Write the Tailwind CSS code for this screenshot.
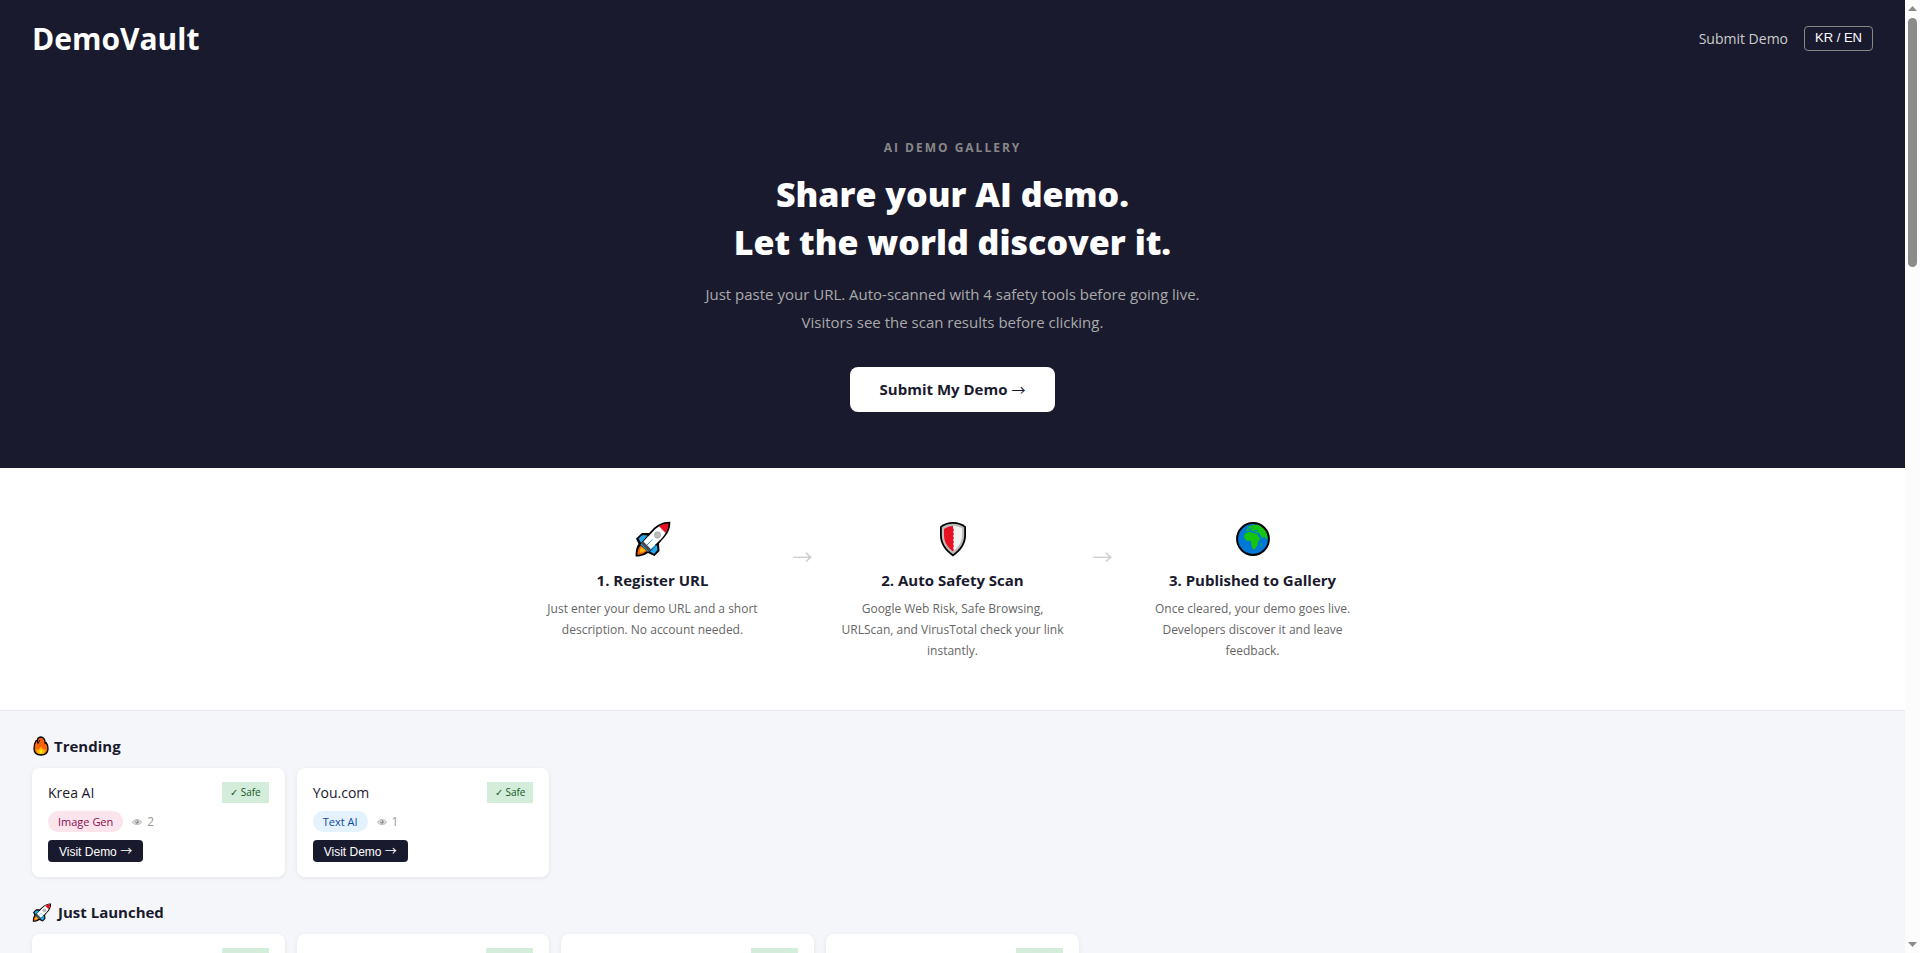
<!DOCTYPE html>
<html lang="en">
<head>
    <meta charset="UTF-8">
    <meta name="viewport" content="width=device-width, initial-scale=1.0">
    <title>DemoVault</title>
    <!-- Tailwind CSS CDN -->
    <script src="https://cdn.jsdelivr.net/npm/@tailwindcss/browser@4"></script>
</head>
<body class="flex h-screen overflow-hidden bg-[#f5f6fa] font-['Open_Sans','Noto_Sans',sans-serif] text-[#1a1a2e]">

    <!-- Shared icons -->
    <svg class="hidden" aria-hidden="true">
        <symbol id="icon-rocket" viewBox="0 0 36 36">
            <path d="M35.3 .8C28 .6 22 3.600 17 9L14 12 7 12 1 17.500 3.500 23C1 26 .5 31 .6 35.600 5 35.600 9 34.800 13 32L19.500 35 24.500 30 24 22.500 27 19C32.500 13.500 35.600 8 35.300 .8Z" fill="#000"/>
            <path d="M7.500 14 3.500 17.500 6 22 12.500 14.500Z M22 24 15 30.500 19 33 22.500 29Z" fill="#26a7ea"/>
            <path d="M12 17 5.500 23.500 13 31 21 25 13 15Z" fill="#26a7ea"/>
            <path d="M5.500 24.500C3.200 27 2.500 30 2.400 33.700 6.500 33.500 9 32.500 12 30Z" fill="#f7630c"/>
            <path d="M6.500 26C5 28 4.500 30 5 31.500 7 31.500 8.500 31 10.500 29.500Z" fill="#ffb900"/>
            <path d="M6 22.500 8.500 20 16 28 13.500 30.500Z" fill="#454b4f"/>
            <path d="M33 3C27 3.200 22.500 5.800 18 10.500L8.500 20.500 15.800 28 26 18C30 14 32.800 9 33 3Z" fill="#fff"/>
            <path d="M33.500 2.500C30 2.600 27 3.500 24 5.200L30.500 12C32.500 9 33.400 6 33.500 2.500Z" fill="#e81123"/>
            <circle cx="22.5" cy="14" r="3.200" fill="#bdbdbd" stroke="#999" stroke-width=".6"/>
            <path d="M12 24 17.500 18.500" stroke="#26a7ea" stroke-width="1"/>
        </symbol>
        <symbol id="icon-shield" viewBox="0 0 28 36">
            <path d="M14 1C9 1 4.500 2.500 1 5.500V14C1 23 6 30 14 35.500 22 30 27 23 27 14V5.500C23.500 2.500 19 1 14 1Z" fill="#000"/>
            <path d="M14 2.700C10 2.700 6 3.800 2.800 6.300V14C2.800 22 7 28.200 14 33.200 21 28.200 25.200 22 25.200 14V6.300C22 3.800 18 2.700 14 2.700Z" fill="#bdbdbd"/>
            <path d="M14 5C18 5 21 6 23 7.500V14C23 20.500 20 26 14 30.500Z" fill="#f2f2f2"/>
            <path d="M14 5C10 5 7 6.500 5 8V14C5 20.500 8 26 14 30.500L15 29 14 27 15 25 14 23 15 21 14 19 15 17 14 15 15 13 14 11 15 9 14 7Z" fill="#e81123"/>
        </symbol>
        <symbol id="icon-globe" viewBox="0 0 34 34">
            <circle cx="17" cy="17" r="16" fill="#0078d7"/>
            <path d="M9 11.500 13 9.800 16 10.500 18.500 11.500 21 11.500 22.500 15 24.500 16 22 20 21.500 23 19 27 17 27.500 15.500 23.500 15 19 10 18.500 7.800 15Z M10.500 8.500 12 5 17 3 22 2.500 29 7 32 15 31 18 28.500 14.500 26.500 16.500 23 11 17.500 9.500 14.500 8 11.500 9.500Z M24.500 22 26 21 25 25Z" fill="#16c60c"/>
            <path d="M12 6.500 15 7.500 17 5.500 M18 8.500 22 9" stroke="#0078d7" stroke-width="1" fill="none"/>
            <circle cx="17" cy="17" r="15.900" fill="none" stroke="#000" stroke-width="2"/>
        </symbol>
        <symbol id="icon-fire" viewBox="0 0 16 20">
            <path d="M7.500 1C5 1.300 4.500 3 4.300 4.500L3 4.800C1.500 7 .8 10 1 13 1.200 17 4 19 8 19S14.800 17 15 13C15.200 10.500 14.300 8 13 6.500L12.200 7C12 4 10.500 1 7.500 1Z" fill="#f7630c" stroke="#000" stroke-width="1.300"/>
            <path d="M4.300 4.500 5 7.500 7 4" fill="none" stroke="#000" stroke-width="1"/>
            <path d="M3.500 13 5.500 14 8 10.500 10.500 14 12.500 13C13 16 11 18 8 18S3 16 3.500 13Z" fill="#ffb900"/>
            <path d="M8 13.500C9.500 15 10 17.500 8 17.500S6.500 15 8 13.500Z" fill="#fff100"/>
        </symbol>
        <symbol id="icon-eye" viewBox="0 0 10 8">
            <path d="M.3 4.200C2.500 .6 7.500 .6 9.700 4.200 7.500 7.500 2.500 7.500 .3 4.200Z" fill="#ddd" stroke="#aaa" stroke-width=".7"/>
            <circle cx="5" cy="4" r="1.800" fill="#8c8c8c"/>
            <circle cx="4.300" cy="3.400" r=".7" fill="#eee"/>
        </symbol>
    </svg>

    <div class="min-w-0 flex-1 overflow-hidden">
        <div class="min-h-[468px] bg-[#1a1a2e] text-white">
            <header class="flex items-center justify-between px-8 pt-4">
                <a href="#" class="text-[30px] leading-[46px] font-bold">DemoVault</a>
                <nav class="flex items-center gap-4">
                    <a href="#submit" class="text-[14px] leading-5 text-[#ccc]">Submit Demo</a>
                    <button type="button" class="mb-[2px] h-[25px] rounded border border-[#888] px-[10px] font-['Liberation_Sans',Arial,sans-serif] text-[13px] leading-4">KR / EN</button>
                </nav>
            </header>

            <section class="flex flex-col items-center pt-[77px] text-center">
                <p class="text-[12px] leading-[18px] font-bold tracking-[2px] text-[#888] uppercase">AI Demo Gallery</p>
                <h1 class="mt-[13px] text-[34px] leading-[48px] font-extrabold">Share your AI demo.<br>Let the world discover it.</h1>
                <p class="mt-[14px] text-[15px] leading-7 text-[#aaa]">Just paste your URL. Auto-scanned with 4 safety tools before going live.<br>Visitors see the scan results before clicking.</p>
                <a href="#submit" id="submit" class="mt-[31px] rounded-lg bg-white px-[30px] py-3 text-[15px] leading-[21px] font-bold text-[#1a1a2e]">Submit My Demo <span class="font-['Noto_Sans_CJK_KR'] text-[14px] font-normal">→</span></a>
            </section>
        </div>

        <!-- How it works -->
        <section class="flex min-h-[243px] justify-center border-b border-[#e5e8ee] bg-white pt-[53px] text-center">
            <div class="w-60">
                <svg class="mx-auto h-9 w-9"><use href="#icon-rocket"/></svg>
                <h3 class="mt-[11px] text-[15px] leading-6 font-bold">1. Register URL</h3>
                <p class="mt-[6px] text-[12px] leading-[21px] text-[#666]">Just enter your demo URL and a short<br>description. No account needed.</p>
            </div>
            <div class="w-[60px] pt-[22px] font-['Noto_Sans_CJK_KR'] text-[20px] leading-7 text-[#ccc]">→</div>
            <div class="w-60">
                <svg class="mx-auto h-9 w-7"><use href="#icon-shield"/></svg>
                <h3 class="mt-[11px] text-[15px] leading-6 font-bold">2. Auto Safety Scan</h3>
                <p class="mt-[6px] text-[12px] leading-[21px] text-[#666]">Google Web Risk, Safe Browsing,<br>URLScan, and VirusTotal check your link<br>instantly.</p>
            </div>
            <div class="w-[60px] pt-[22px] font-['Noto_Sans_CJK_KR'] text-[20px] leading-7 text-[#ccc]">→</div>
            <div class="w-60">
                <svg class="mx-auto h-9 w-[34px]"><use href="#icon-globe"/></svg>
                <h3 class="mt-[11px] text-[15px] leading-6 font-bold">3. Published to Gallery</h3>
                <p class="mt-[6px] text-[12px] leading-[21px] text-[#666]">Once cleared, your demo goes live.<br>Developers discover it and leave<br>feedback.</p>
            </div>
        </section>

        <main class="px-8 pt-[23px]">
            <section>
                <h2 class="flex items-center gap-1 text-[15px] leading-6 font-bold"><svg class="h-5 w-[18px]"><use href="#icon-fire"/></svg>Trending</h2>
                <div class="mt-[10px] grid grid-cols-[repeat(auto-fill,minmax(220px,1fr))] gap-3">
                    <article class="rounded-lg bg-white px-4 pt-[14px] pb-[15px] shadow-[0_1px_4px_rgba(0,0,0,0.08)]">
                        <div class="flex items-start justify-between">
                            <h3 class="text-[14px] leading-[21px] font-medium">Krea AI</h3>
                            <span class="bg-[#d4edda] px-2 text-[10px] leading-[21px] text-[#155724]">✓ Safe</span>
                        </div>
                        <div class="mt-2 flex items-center gap-[9px]">
                            <span class="rounded-full bg-[#fce4ec] px-[10px] text-[11px] leading-[21px] text-[#880e4f]">Image Gen</span>
                            <span class="flex items-center gap-[5px] text-[12px] leading-[21px] text-[#999]"><svg class="h-2 w-[10px]"><use href="#icon-eye"/></svg>2</span>
                        </div>
                        <button type="button" class="mt-2 block h-[22px] rounded bg-[#1a1a2e] px-[11px] font-['Liberation_Sans',Arial,sans-serif] text-[12px] leading-4 text-white">Visit Demo <span class="font-['Noto_Sans_CJK_KR']">→</span></button>
                    </article>
                    <article class="rounded-lg bg-white px-4 pt-[14px] pb-[15px] shadow-[0_1px_4px_rgba(0,0,0,0.08)]">
                        <div class="flex items-start justify-between">
                            <h3 class="text-[14px] leading-[21px] font-medium">You.com</h3>
                            <span class="bg-[#d4edda] px-2 text-[10px] leading-[21px] text-[#155724]">✓ Safe</span>
                        </div>
                        <div class="mt-2 flex items-center gap-[9px]">
                            <span class="rounded-full bg-[#e3f2fd] px-[10px] text-[11px] leading-[21px] text-[#0d47a1]">Text AI</span>
                            <span class="flex items-center gap-[5px] text-[12px] leading-[21px] text-[#999]"><svg class="h-2 w-[10px]"><use href="#icon-eye"/></svg>1</span>
                        </div>
                        <button type="button" class="mt-2 block h-[22px] rounded bg-[#1a1a2e] px-[11px] font-['Liberation_Sans',Arial,sans-serif] text-[12px] leading-4 text-white">Visit Demo <span class="font-['Noto_Sans_CJK_KR']">→</span></button>
                    </article>
                </div>
            </section>

            <section class="mt-[23px]">
                <h2 class="flex items-center gap-[6px] text-[15px] leading-6 font-bold"><svg class="h-[19px] w-5"><use href="#icon-rocket"/></svg>Just Launched</h2>
                <div class="mt-[10px] grid grid-cols-[repeat(auto-fill,minmax(220px,1fr))] gap-3">
                    <article class="flex h-[109px] items-start justify-end rounded-lg bg-white px-4 pt-[14px] shadow-[0_1px_4px_rgba(0,0,0,0.08)]"><span class="h-[21px] w-[47px] bg-[#d4edda]"></span></article>
                    <article class="flex h-[109px] items-start justify-end rounded-lg bg-white px-4 pt-[14px] shadow-[0_1px_4px_rgba(0,0,0,0.08)]"><span class="h-[21px] w-[47px] bg-[#d4edda]"></span></article>
                    <article class="flex h-[109px] items-start justify-end rounded-lg bg-white px-4 pt-[14px] shadow-[0_1px_4px_rgba(0,0,0,0.08)]"><span class="h-[21px] w-[47px] bg-[#d4edda]"></span></article>
                    <article class="flex h-[109px] items-start justify-end rounded-lg bg-white px-4 pt-[14px] shadow-[0_1px_4px_rgba(0,0,0,0.08)]"><span class="h-[21px] w-[47px] bg-[#d4edda]"></span></article>
                </div>
            </section>
        </main>
    </div>

    <!-- Scroll track -->
    <div class="flex w-[15px] shrink-0 flex-col items-center justify-between bg-[#fcfcfc] py-[6px]">
        <div class="flex flex-col items-center gap-[7px]">
            <svg class="h-[5px] w-[9px]" viewBox="0 0 9 5"><path d="M4.500 0 9 5H0Z" fill="#8b8b8b"/></svg>
            <div class="h-[249px] w-[9px] rounded-full bg-[#8b8b8b]"></div>
        </div>
        <svg class="h-[5px] w-[9px]" viewBox="0 0 9 5"><path d="M4.500 5 9 0H0Z" fill="#8b8b8b"/></svg>
    </div>

</body>
</html>
